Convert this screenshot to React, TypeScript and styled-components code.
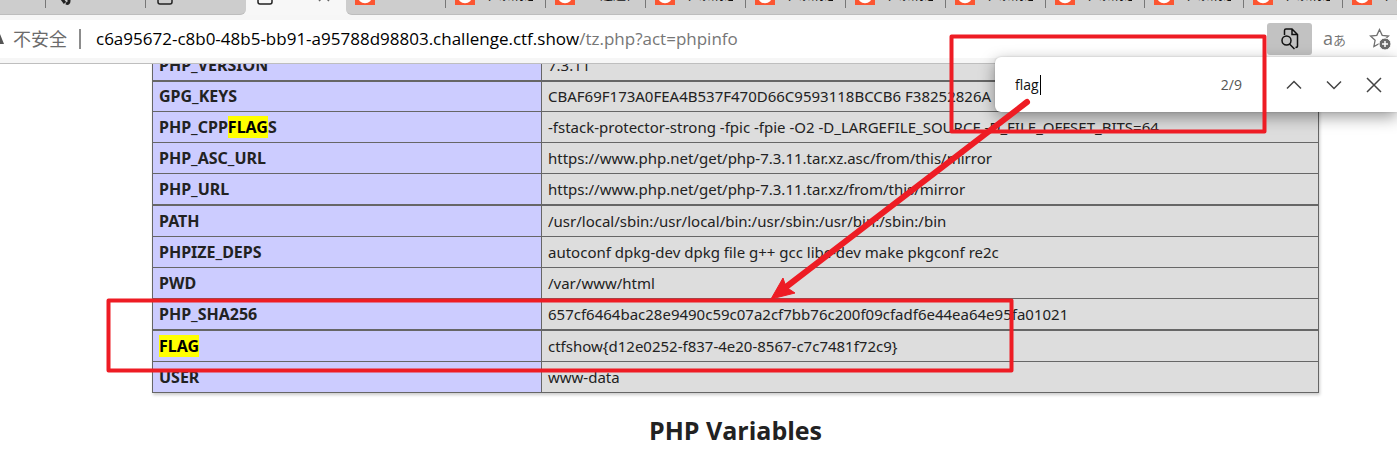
import React from "react";
import styled, { createGlobalStyle, css } from "styled-components";

const sans = `"Open Sans", "Noto Sans", "Noto Sans CJK SC", sans-serif`;

const GlobalStyle = createGlobalStyle`
  * { box-sizing: border-box; }
  html, body { margin: 0; height: 100%; overflow: hidden; }
  body { background: #fff; color: #222; font-family: ${sans}; font-size: 15px; }
  button, input { font: inherit; color: inherit; border: 0; padding: 0; background: none; outline: 0; }
`;

const Page = styled.div`
  position: relative;
  display: flex;
  flex-direction: column;
  height: 100vh;
  overflow: hidden;
`;

const TabStrip = styled.nav`
  display: flex;
  align-items: flex-end;
  height: 15px;
  overflow: hidden;
  background: #f7f7f7;
`;

const TabItem = styled.button<{ $kind?: "first" | "active" | "last" | "after" }>`
  flex: 0 0 100px;
  min-width: 0;
  display: flex;
  align-items: center;
  gap: 12px;
  height: 36px;
  padding: 0 0 4px 9px;
  font-size: 13px;
  line-height: 20px;
  color: #111;
  background: #cdcdcd;
  border-bottom: 1px solid #bdbdbd;
  white-space: nowrap;
  &:nth-child(n + 12) { flex-basis: 99px; }
  ${(p) => p.$kind === "first" && css`flex-basis: 46px; padding-left: 4px; gap: 0;`}
  ${(p) => p.$kind === "last" && css`border-bottom-right-radius: 6px;`}
  ${(p) => p.$kind === "after" && css`border-bottom-left-radius: 6px;`}
  ${(p) => p.$kind === "active" && css`background: #f7f7f7; border-color: #f7f7f7; padding-right: 16px;`}
`;

const TabLabel = styled.span`
  flex: 1;
  min-width: 0;
  padding-bottom: 2px;
  overflow: hidden;
  text-align: left;
`;

const TabRule = styled.span`
  width: 1px;
  height: 26px;
  background: #777;
`;

const Toolbar = styled.header`
  padding: 5px 0;
  background: #f6f6f6;
  border-bottom: 1px solid #bebebe;
`;

const AddressRow = styled.div`
  display: flex;
  align-items: center;
  height: 38px;
  background: #fff;
`;

const Security = styled.button`
  display: flex;
  align-items: center;
  gap: 9px;
  font-size: 18px;
  line-height: 26px;
  color: #6b6b6b;
`;

const Divider = styled.span`
  width: 2px;
  height: 20px;
  margin: 0 15px 0 12px;
  background: #8c8c8c;
`;

const Url = styled.div`
  flex: 1;
  font-size: 17px;
  line-height: 24px;
  color: #767676;
  white-space: nowrap;
`;

const Host = styled.span`
  color: #000;
`;

const Tools = styled.div`
  display: flex;
  margin-right: -5px;
`;

const Tool = styled.button<{ $on?: boolean }>`
  display: flex;
  align-items: center;
  justify-content: center;
  flex: 0 0 45px;
  height: 32px;
  border-radius: 3px;
  font-size: 18px;
  line-height: 20px;
  color: #777;
  background: ${(p) => (p.$on ? "#c2c2c2" : "transparent")};
`;

const Kana = styled.small`
  font-size: 13px;
`;

const FindBar = styled.form`
  position: absolute;
  top: 57px;
  right: 0;
  display: flex;
  align-items: center;
  width: 402px;
  height: 55px;
  padding: 0 3px 0 20px;
  background: #fff;
  border-radius: 6px 0 0 6px;
  box-shadow: 0 5px 16px rgba(0, 0, 0, 0.4), 0 0 2px rgba(0, 0, 0, 0.2);
`;

const FindField = styled.label`
  flex: 1;
  display: flex;
  align-items: center;
`;

const FindInput = styled.input`
  width: 25px;
  font-size: 14px;
  line-height: 20px;
  color: #111;
`;

const Caret = styled.span`
  width: 1px;
  height: 20px;
  background: #000;
`;

const Count = styled.output`
  margin-right: 32px;
  font-size: 14px;
  color: #555;
`;

const FindButton = styled.button`
  display: flex;
  align-items: center;
  justify-content: center;
  width: 40px;
  height: 40px;
  color: #444;
`;

const Viewport = styled.main`
  flex: 1;
  min-height: 0;
  overflow: hidden;
  display: flex;
  flex-direction: column;
`;

const Scrolled = styled.div`
  margin: -15px 78px 0 152px;
`;

const InfoTable = styled.table`
  width: 100%;
  table-layout: fixed;
  border-collapse: collapse;
  box-shadow: 1px 2px 3px #ccc;
  font-family: "Noto Sans", "Open Sans", sans-serif;
`;

const cell = css`
  height: 31px;
  padding: 0 6px;
  border: 1px solid #666;
  line-height: 20px;
  text-align: left;
  white-space: nowrap;
`;

const Key = styled.th`
  ${cell}
  width: 389px;
  background: #ccccff;
  font-size: 16px;
  font-weight: 700;
`;

const Value = styled.td`
  ${cell}
  background: #ddd;
`;

const Row = styled.tr<{ $thick?: boolean; $tall?: boolean }>`
  & > ${Key}, & > ${Value} {
    ${(p) => p.$thick && css`border-bottom-width: 2px;`}
    ${(p) => p.$tall && css`height: 32px;`}
  }
`;

const Hit = styled.mark`
  background: #ff0;
  color: #000;
`;

const Heading = styled.h2`
  margin: 19px 0 0;
  font-size: 25px;
  line-height: 36px;
  font-weight: 700;
  text-align: center;
`;

const Markup = styled.svg`
  position: absolute;
  top: 0;
  right: 0;
  pointer-events: none;
`;

const SiteIcon = () => (
  <svg width="20" height="20" viewBox="0 0 20 20">
    <rect width="20" height="20" fill="#fc5531" />
    <circle cx="10" cy="11" r="5.500" fill="none" stroke="#fff" strokeWidth="3.500" />
  </svg>
);

const PageIcon = () => (
  <svg width="20" height="20" viewBox="0 0 20 20" fill="none" stroke="#222" strokeWidth="1.500">
    <path d="M3 3.500a2 2 0 0 1 2-2h7l5 4.500v11a2 2 0 0 1-2 2H5a2 2 0 0 1-2-2z" />
  </svg>
);

const PawIcon = () => (
  <svg width="20" height="20" viewBox="0 0 20 20" fill="none" stroke="#222" strokeWidth="3">
    <path d="M7 2v12l3 4M14 2v14c0 2-1 3-3 2" />
  </svg>
);

const TabCross = () => (
  <svg width="12" height="14" viewBox="0 0 12 14" fill="none" stroke="#666" strokeWidth="1.500">
    <path d="M1 3l10 10M11 3L1 13" />
  </svg>
);

type TabInfo = { label: string; icon: "site" | "page" | "paw" | "none"; kind?: "first" | "active" | "last" | "after"; rule: boolean };

const tabs: TabInfo[] = [
  { label: "ctf.show", icon: "none", kind: "first", rule: true },
  { label: "", icon: "paw", rule: true },
  { label: "ctf.sh", icon: "page", kind: "last", rule: false },
  { label: "", icon: "page", kind: "active", rule: false },
  { label: "CTF", icon: "site", kind: "after", rule: true },
  { label: "(4条消息)", icon: "site", rule: true },
  { label: "一道题目", icon: "site", rule: true },
  ...Array.from({ length: 8 }, (): TabInfo => ({ label: "(4条消息)", icon: "site", rule: true })),
];

const rows: { key: React.ReactNode; value: string; thick?: boolean; tall?: boolean }[] = [
  { key: "PHP_VERSION", value: "7.3.11", thick: true },
  { key: "GPG_KEYS", value: "CBAF69F173A0FEA4B537F470D66C9593118BCCB6 F38252826A" },
  { key: <>PHP_CPP<Hit>FLAG</Hit>S</>, value: "-fstack-protector-strong -fpic -fpie -O2 -D_LARGEFILE_SOURCE -D_FILE_OFFSET_BITS=64" },
  { key: "PHP_ASC_URL", value: "https://www.php.net/get/php-7.3.11.tar.xz.asc/from/this/mirror" },
  { key: "PHP_URL", value: "https://www.php.net/get/php-7.3.11.tar.xz/from/this/mirror", thick: true },
  { key: "PATH", value: "/usr/local/sbin:/usr/local/bin:/usr/sbin:/usr/bin:/sbin:/bin", tall: true },
  { key: "PHPIZE_DEPS", value: "autoconf dpkg-dev dpkg file g++ gcc libc-dev make pkgconf re2c" },
  { key: "PWD", value: "/var/www/html" },
  { key: "PHP_SHA256", value: "657cf6464bac28e9490c59c07a2cf7bb76c200f09cfadf6e44ea64e95fa01021", thick: true },
  { key: <Hit>FLAG</Hit>, value: "ctfshow{d12e0252-f837-4e20-8567-c7c7481f72c9}", tall: true },
  { key: "USER", value: "www-data" },
];

export default function App() {
  return (
    <Page>
      <GlobalStyle />
      <TabStrip>
        {tabs.map((t, i) => (
          <TabItem key={i} type="button" $kind={t.kind}>
            {t.icon === "site" && <SiteIcon />}
            {t.icon === "page" && <PageIcon />}
            {t.icon === "paw" && <PawIcon />}
            <TabLabel>{t.label}</TabLabel>
            {t.kind === "active" && <TabCross />}
            {t.rule && <TabRule />}
          </TabItem>
        ))}
      </TabStrip>
      <Toolbar>
        <AddressRow>
          <Security type="button">
            <svg width="4" height="12" viewBox="0 0 4 12"><path d="M0 1L4 11H0z" fill="#555" /></svg>
            不安全
          </Security>
          <Divider />
          <Url><Host>c6a95672-c8b0-48b5-bb91-a95788d98803.challenge.ctf.show</Host>/tz.php?act=phpinfo</Url>
          <Tools>
            <Tool type="button" aria-label="Find on page" $on>
              <svg width="20" height="22" viewBox="0 0 20 22" fill="none" stroke="#111" strokeWidth="1.500">
                <path d="M4.500 7V2.500Q4.500 1 6 1H12l5.500 5.500V18q0 1.500-2 1.500M12 1v5.500h5.500" />
                <circle cx="6.500" cy="12.500" r="4.500" /><path d="M9.500 16l5 5" />
              </svg>
            </Tool>
            <Tool type="button" aria-label="Translate">
              <span>a<Kana>あ</Kana></span>
            </Tool>
            <Tool type="button" aria-label="Add to favourites">
              <svg width="22" height="22" viewBox="0 0 22 22" fill="none">
                <path d="M10.500 1.500l2.700 5.800 6.300.7-4.700 4.300 1.200 6.200-5.500-3-5.600 3 1.200-6.200L1.500 8l6.300-.7z" stroke="#707070" strokeWidth="1.300" />
                <circle cx="16" cy="16" r="6" fill="#6a6a6a" stroke="#fff" />
                <path d="M16 13v6M13 16h6" stroke="#fff" strokeWidth="1.500" />
              </svg>
            </Tool>
          </Tools>
        </AddressRow>
      </Toolbar>
      <Viewport>
        <Scrolled>
          <InfoTable>
            <tbody>
              {rows.map((r, i) => (
                <Row key={i} $thick={r.thick} $tall={r.tall}>
                  <Key scope="row">{r.key}</Key>
                  <Value>{r.value}</Value>
                </Row>
              ))}
            </tbody>
          </InfoTable>
          <Heading>PHP Variables</Heading>
        </Scrolled>
      </Viewport>
      <FindBar onSubmit={(e) => e.preventDefault()}>
        <FindField>
          <FindInput aria-label="Find on page" defaultValue="flag" />
          <Caret />
        </FindField>
        <Count>2/9</Count>
        <FindButton type="button" aria-label="Previous">
          <svg width="16" height="10" viewBox="0 0 16 10" fill="none" stroke="currentColor" strokeWidth="1.500"><path d="M1 8.500L8 1.500l7 7" /></svg>
        </FindButton>
        <FindButton type="button" aria-label="Next">
          <svg width="16" height="10" viewBox="0 0 16 10" fill="none" stroke="currentColor" strokeWidth="1.500"><path d="M1 1.500L8 8.500l7-7" /></svg>
        </FindButton>
        <FindButton type="button" aria-label="Close">
          <svg width="16" height="16" viewBox="0 0 16 16" fill="none" stroke="currentColor" strokeWidth="1.500"><path d="M1 1l14 14M15 1L1 15" /></svg>
        </FindButton>
      </FindBar>
      <Markup width="1397" height="458" viewBox="0 0 1397 458" fill="none" stroke="#ee1c24" strokeWidth="4" strokeLinejoin="round">
        <rect x="951.500" y="36.500" width="313" height="95" />
        <rect x="108.500" y="300.500" width="903" height="70" />
        <path d="M1027 102L786 287" strokeWidth="6" strokeLinecap="round" />
        <path d="M771 299L783 278L786 287L795 293Z" fill="#ee1c24" strokeWidth="1" />
      </Markup>
    </Page>
  );
}
